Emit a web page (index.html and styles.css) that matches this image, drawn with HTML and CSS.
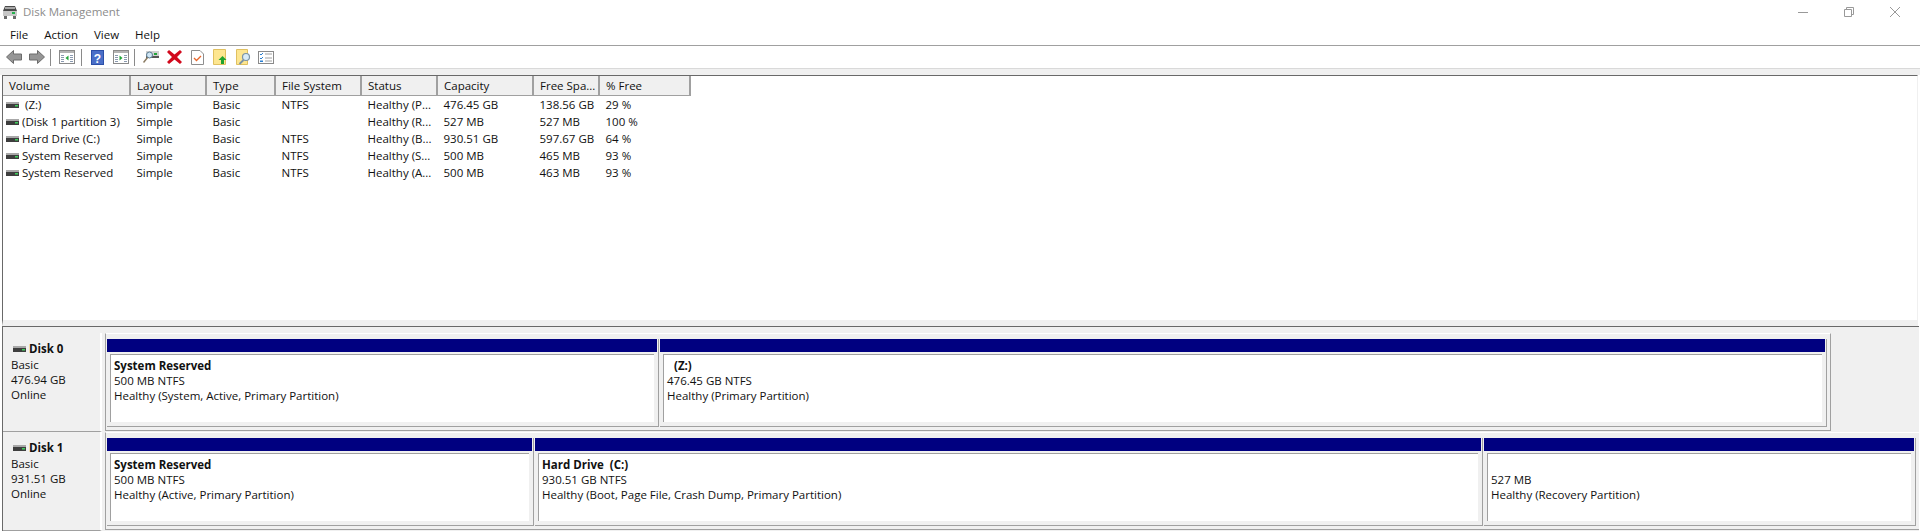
FILE: index.html
```html
<!DOCTYPE html>
<html lang="en">
<head>
  <meta charset="UTF-8">
  <title>Disk Management</title>
  <link rel="stylesheet" href="styles.css">
</head>
<body>
  <!-- Title bar -->
  <div class="titlebar">
    <svg class="app-icon" width="16" height="14" viewBox="0 0 16 14">
      <path d="M3 1h10l2 5H1z" fill="#4a4a4a"/>
      <rect x="3" y="2" width="10" height="2" fill="#a8a8a8"/>
      <rect x="1" y="6" width="14" height="5" fill="#c8c8c8"/>
      <rect x="10" y="7" width="3" height="2" fill="#22b14c"/>
      <path d="M2 11h3v3H2zM11 11h3v3h-3z" fill="#6a6a6a"/>
    </svg>
    <span class="app-title">Disk Management</span>
    <div class="win-controls">
      <svg width="12" height="12" viewBox="0 0 12 12"><path d="M1 6.500h10" stroke="#999" fill="none"/></svg>
      <svg width="12" height="12" viewBox="0 0 12 12"><path d="M1.500 3.500h7v7h-7zM3.500 3.500v-2h7v7h-2" stroke="#999" fill="none"/></svg>
      <svg width="12" height="12" viewBox="0 0 12 12"><path d="M1 1l10 10M11 1L1 11" stroke="#999" fill="none"/></svg>
    </div>
  </div>

  <!-- Menu -->
  <div class="menubar">
    <span class="menu-item">File</span>
    <span class="menu-item">Action</span>
    <span class="menu-item">View</span>
    <span class="menu-item">Help</span>
  </div>

  <!-- Toolbar -->
  <div class="toolbar">
    <span class="tool"><svg width="16" height="14" viewBox="0 0 16 14"><path d="M0.500 7L7.500 0.500V4H15.500V10H7.500V13.500z" fill="#969696" stroke="#6c6c6c"/></svg></span>
    <span class="tool"><svg width="16" height="14" viewBox="0 0 16 14"><path d="M15.500 7L8.500 0.500V4H0.500V10H8.500V13.500z" fill="#969696" stroke="#6c6c6c"/></svg></span>
    <span class="sep"></span>
    <span class="tool"><svg width="16" height="14" viewBox="0 0 16 14"><rect x="0.500" y="0.500" width="15" height="13" fill="#fff" stroke="#8a8a8a"/><rect x="1" y="1" width="14" height="2" fill="#b4b4b4"/><path d="M2 5h3v1H2zM2 7h3v1H2zM2 9h3v1H2zM2 11h3v1H2zM11 5h3v1h-3zM11 7h3v1h-3zM11 9h3v1h-3zM11 11h3v1h-3z" fill="#8a9ab0"/><path d="M9.500 5.500v5L6.500 8z" fill="#22a53a"/></svg></span>
    <span class="sep"></span>
    <span class="tool"><svg width="13" height="15" viewBox="0 0 13 15"><rect width="13" height="15" fill="#2c4fa8"/><rect x="1" y="1" width="11" height="13" fill="#4a6fc8"/><text x="6.500" y="12.500" class="help-mark">?</text></svg></span>
    <span class="tool"><svg width="16" height="14" viewBox="0 0 16 14"><rect x="0.500" y="0.500" width="15" height="13" fill="#fff" stroke="#8a8a8a"/><rect x="1" y="1" width="14" height="2" fill="#b4b4b4"/><path d="M2 5h3v1H2zM2 7h3v1H2zM2 9h3v1H2zM2 11h3v1H2zM11 5h3v1h-3zM11 7h3v1h-3zM11 9h3v1h-3zM11 11h3v1h-3z" fill="#8a9ab0"/><path d="M6.500 5.500v5L9.500 8z" fill="#22a53a"/></svg></span>
    <span class="sep"></span>
    <span class="tool"><svg width="16" height="14" viewBox="0 0 16 14"><rect x="3" y="1" width="13" height="6" fill="#d0d0d0"/><rect x="3" y="6" width="13" height="2" fill="#555"/><rect x="11" y="3" width="3" height="2" fill="#22a53a"/><circle cx="6.500" cy="5" r="3" fill="#cfe6f5" stroke="#5a7a90"/><path d="M4.500 7.500L0.500 12.500" stroke="#8a7a60" stroke-width="1.500"/></svg></span>
    <span class="tool"><svg width="15" height="14" viewBox="0 0 15 14"><path d="M2 0L7.500 4.500L13 0L15 2L10 7L15 12L13 14L7.500 9.500L2 14L0 12L5 7L0 2z" fill="#d2091c"/></svg></span>
    <span class="tool"><svg width="13" height="15" viewBox="0 0 13 15"><path d="M0.500 0.500H9L12.500 4V14.500H0.500z" fill="#fff" stroke="#8e8e8e"/><path d="M3 8L5.500 10.500L10 6" stroke="#e8662a" stroke-width="1.300" fill="none"/></svg></span>
    <span class="tool"><svg width="14" height="16" viewBox="0 0 14 16"><path d="M0.500 0.500H12.500V15.500H0.500z" fill="#fde690" stroke="#e0c060"/><path d="M9.500 7L13.500 11H11V15H8V11H5.500z" fill="#1fa32e"/></svg></span>
    <span class="tool"><svg width="15" height="16" viewBox="0 0 15 16"><path d="M0.500 0.500H11.500V15.500H0.500z" fill="#fde690" stroke="#e0c060"/><circle cx="10" cy="8" r="3.500" fill="#d8ebf7" stroke="#7a93a5" stroke-width="1.200"/><path d="M7.500 11L3.500 15" stroke="#7a93a5" stroke-width="1.800"/></svg></span>
    <span class="tool"><svg width="16" height="13" viewBox="0 0 16 13"><rect x="0.500" y="0.500" width="15" height="12" fill="#fff" stroke="#8a8a8a"/><path d="M2 3l1 1 2-2M2 7l1 1 2-2" stroke="#2a7fd0" fill="none"/><path d="M7 3h7M7 7h7M7 10h7" stroke="#a0a0a0"/><rect x="2" y="9.500" width="3" height="1.500" fill="#2a7fd0"/></svg></span>
  </div>
  <div class="toolbar-gap"></div>

  <!-- Volume list -->
  <div class="list-pane">
    <table class="volumes">
      <colgroup>
        <col class="c-volume"><col class="c-layout"><col class="c-type"><col class="c-fs">
        <col class="c-status"><col class="c-capacity"><col class="c-free"><col class="c-pct"><col>
      </colgroup>
      <thead>
        <tr>
          <th>Volume</th><th>Layout</th><th>Type</th><th>File System</th><th>Status</th><th>Capacity</th><th>Free Spa...</th><th>% Free</th><th class="filler"></th>
        </tr>
      </thead>
      <tbody>
        <tr>
          <td class="vol"><svg class="vol-icon" width="13" height="6" viewBox="0 0 13 6"><rect width="13" height="2" fill="#a8a8a8"/><rect y="2" width="13" height="4" fill="#3e3e3e"/><rect x="9" y="3" width="3" height="1.500" fill="#3ecf5c"/></svg><span class="vol-z">(Z:)</span></td>
          <td>Simple</td><td>Basic</td><td>NTFS</td><td>Healthy (P...</td><td>476.45 GB</td><td>138.56 GB</td><td>29 %</td><td></td>
        </tr>
        <tr>
          <td class="vol"><svg class="vol-icon" width="13" height="6" viewBox="0 0 13 6"><rect width="13" height="2" fill="#a8a8a8"/><rect y="2" width="13" height="4" fill="#3e3e3e"/><rect x="9" y="3" width="3" height="1.500" fill="#3ecf5c"/></svg>(Disk 1 partition 3)</td>
          <td>Simple</td><td>Basic</td><td></td><td>Healthy (R...</td><td>527 MB</td><td>527 MB</td><td>100 %</td><td></td>
        </tr>
        <tr>
          <td class="vol"><svg class="vol-icon" width="13" height="6" viewBox="0 0 13 6"><rect width="13" height="2" fill="#a8a8a8"/><rect y="2" width="13" height="4" fill="#3e3e3e"/><rect x="9" y="3" width="3" height="1.500" fill="#3ecf5c"/></svg>Hard Drive (C:)</td>
          <td>Simple</td><td>Basic</td><td>NTFS</td><td>Healthy (B...</td><td>930.51 GB</td><td>597.67 GB</td><td>64 %</td><td></td>
        </tr>
        <tr>
          <td class="vol"><svg class="vol-icon" width="13" height="6" viewBox="0 0 13 6"><rect width="13" height="2" fill="#a8a8a8"/><rect y="2" width="13" height="4" fill="#3e3e3e"/><rect x="9" y="3" width="3" height="1.500" fill="#3ecf5c"/></svg>System Reserved</td>
          <td>Simple</td><td>Basic</td><td>NTFS</td><td>Healthy (S...</td><td>500 MB</td><td>465 MB</td><td>93 %</td><td></td>
        </tr>
        <tr>
          <td class="vol"><svg class="vol-icon" width="13" height="6" viewBox="0 0 13 6"><rect width="13" height="2" fill="#a8a8a8"/><rect y="2" width="13" height="4" fill="#3e3e3e"/><rect x="9" y="3" width="3" height="1.500" fill="#3ecf5c"/></svg>System Reserved</td>
          <td>Simple</td><td>Basic</td><td>NTFS</td><td>Healthy (A...</td><td>500 MB</td><td>463 MB</td><td>93 %</td><td></td>
        </tr>
      </tbody>
    </table>
  </div>

  <!-- Disk map -->
  <div class="disk-pane">
    <div class="disk">
      <div class="disk-label">
        <div class="disk-name"><svg class="vol-icon" width="13" height="6" viewBox="0 0 13 6"><rect width="13" height="2" fill="#a8a8a8"/><rect y="2" width="13" height="4" fill="#3e3e3e"/><rect x="9" y="3" width="3" height="1.500" fill="#3ecf5c"/></svg>Disk 0</div>
        <div>Basic</div>
        <div>476.94 GB</div>
        <div>Online</div>
      </div>
      <div class="disk-map map-0">
        <div class="part p-d0-sys">
          <div class="part-bar"></div>
          <div class="part-body">
            <div class="part-name">System Reserved</div>
            <div>500 MB NTFS</div>
            <div>Healthy (System, Active, Primary Partition)</div>
          </div>
        </div>
        <div class="part p-fill">
          <div class="part-bar"></div>
          <div class="part-body">
            <div class="part-name part-name-z">(Z:)</div>
            <div>476.45 GB NTFS</div>
            <div>Healthy (Primary Partition)</div>
          </div>
        </div>
      </div>
    </div>
    <div class="disk">
      <div class="disk-label">
        <div class="disk-name"><svg class="vol-icon" width="13" height="6" viewBox="0 0 13 6"><rect width="13" height="2" fill="#a8a8a8"/><rect y="2" width="13" height="4" fill="#3e3e3e"/><rect x="9" y="3" width="3" height="1.500" fill="#3ecf5c"/></svg>Disk 1</div>
        <div>Basic</div>
        <div>931.51 GB</div>
        <div>Online</div>
      </div>
      <div class="disk-map map-1">
        <div class="part p-d1-sys">
          <div class="part-bar"></div>
          <div class="part-body">
            <div class="part-name">System Reserved</div>
            <div>500 MB NTFS</div>
            <div>Healthy (Active, Primary Partition)</div>
          </div>
        </div>
        <div class="part p-d1-c">
          <div class="part-bar"></div>
          <div class="part-body">
            <div class="part-name">Hard Drive&nbsp; (C:)</div>
            <div>930.51 GB NTFS</div>
            <div>Healthy (Boot, Page File, Crash Dump, Primary Partition)</div>
          </div>
        </div>
        <div class="part p-fill">
          <div class="part-bar"></div>
          <div class="part-body">
            <div class="part-name">&nbsp;</div>
            <div>527 MB</div>
            <div>Healthy (Recovery Partition)</div>
          </div>
        </div>
      </div>
    </div>
  </div>
</body>
</html>
```

FILE: styles.css
```css
:root {
  --ui-bg: #f0f0f0;
  --line: #a0a0a0;
  --dark-line: #696969;
  --navy: #000080;
  --text: #111;
}
html, body {
  margin: 0;
  padding: 0;
  height: 531px;
  overflow: hidden;
}
body {
  display: flex;
  flex-direction: column;
  background: #fff;
  color: var(--text);
  font-family: 'Open Sans', 'Noto Sans', Arial, sans-serif;
  font-size: 11.5px;
}

/* Title bar */
.titlebar {
  height: 23px;
  display: flex;
  align-items: center;
  padding-left: 2px;
}
.app-icon { margin-right: 5px; }
.app-title {
  color: #8c8c8c;
  font-size: 11.5px;
}
.win-controls {
  margin-left: auto;
  margin-right: 19px;
  display: flex;
  gap: 34px;
}

/* Menu */
.menubar {
  height: 22px;
  display: flex;
  align-items: center;
  padding-left: 2px;
  border-bottom: 1px solid var(--line);
}
.menu-item { padding: 0 8px; }

/* Toolbar */
.toolbar {
  height: 22px;
  display: flex;
  align-items: center;
  padding-left: 2px;
}
.tool {
  width: 23px;
  display: flex;
  justify-content: center;
}
.sep {
  width: 7.5px;
  height: 17px;
  box-sizing: border-box;
  padding-left: 2px;
  background: linear-gradient(#8a8a8a, #8a8a8a) 2px 0 / 1px 100% no-repeat;
}
.help-mark {
  fill: #fff;
  font: bold 12px 'Liberation Sans', sans-serif;
  text-anchor: middle;
}
.toolbar-gap {
  height: 6px;
  background: var(--ui-bg);
  border-top: 1px solid #d9d9d9;
}

/* Volume list */
.list-pane {
  height: 251px;
  box-sizing: border-box;
  margin: 0 2px 0 2px;
  background: #fff;
  border-top: 1px solid var(--dark-line);
  border-left: 1px solid var(--dark-line);
  border-right: 1px solid var(--ui-bg);
  border-bottom: 6px solid var(--ui-bg);
}
.volumes {
  border-collapse: collapse;
  table-layout: fixed;
  width: 100%;
}
.c-volume { width: 127px; }
.c-layout { width: 76px; }
.c-type { width: 69px; }
.c-fs { width: 86px; }
.c-status { width: 76px; }
.c-capacity { width: 96px; }
.c-free { width: 66px; }
.c-pct { width: 91px; }
.volumes th {
  height: 19px;
  padding: 1px 0 0 6px;
  box-sizing: border-box;
  background: var(--ui-bg);
  border-right: 2px solid var(--line);
  border-bottom: 1px solid var(--line);
  font-weight: normal;
  text-align: left;
  white-space: nowrap;
  overflow: hidden;
}
.volumes th.filler {
  background: #fff;
  border-right: none;
  border-bottom: none;
}
.volumes td {
  height: 17px;
  padding: 0 0 0 6.5px;
  white-space: nowrap;
  overflow: hidden;
}
.volumes td.vol { padding-left: 3px; }
.vol-icon {
  margin-right: 3px;
  vertical-align: 1px;
}
.vol-z { padding-left: 3px; }

/* Disk map */
.disk-pane {
  flex: 1;
  display: flex;
  flex-direction: column;
  overflow: hidden;
  background: var(--ui-bg);
  margin: 0 1px 0 2px;
  border-top: 1px solid var(--dark-line);
  padding-top: 6px;
  border-left: 1px solid var(--dark-line);
}
.disk {
  height: 99px;
  flex: none;
  display: flex;
  align-items: flex-start;
}
.disk-label {
  width: 99px;
  height: 99px;
  flex: none;
  box-sizing: border-box;
  padding: 8px 0 0 8px;
  border-bottom: 1px solid var(--line);
  border-right: 2px solid #fff;
  line-height: 15px;
}
.disk-name {
  font-weight: bold;
  font-size: 11.5px;
  line-height: 16px;
  padding-left: 2px;
}
.disk-map {
  height: 98px;
  flex: none;
  margin-left: 3px;
  box-sizing: border-box;
  display: flex;
  padding: 5px 3px 3px 1px;
  border-top: 1px solid #fff;
  border-left: 1px solid var(--line);
  border-right: 1px solid var(--line);
  border-bottom: 1px solid var(--line);
}
.map-0 { width: 1726px; }
.map-1 { width: 1815px; }
.part {
  display: flex;
  flex-direction: column;
  flex: none;
  box-sizing: border-box;
  border-right: 1px solid var(--line);
  border-bottom: 1px solid var(--line);
  padding-right: 1px;
  margin-right: 1px;
}
.p-d0-sys { width: 552px; }
.p-d1-sys { width: 427px; }
.p-d1-c { width: 948px; }
.p-fill {
  flex: 1;
  margin-right: 0;
}
.part-bar {
  height: 13px;
  background: var(--navy);
}
.part-body {
  flex: 1;
  margin: 2px 3px 4px 3px;
  padding: 4px 0 0 3px;
  background: #fff;
  border-top: 1px solid var(--line);
  border-left: 1px solid var(--line);
  line-height: 15px;
}
.part-name {
  font-weight: bold;
  font-size: 11.5px;
  line-height: 14px;
}
.part-name-z { padding-left: 7px; }
```
